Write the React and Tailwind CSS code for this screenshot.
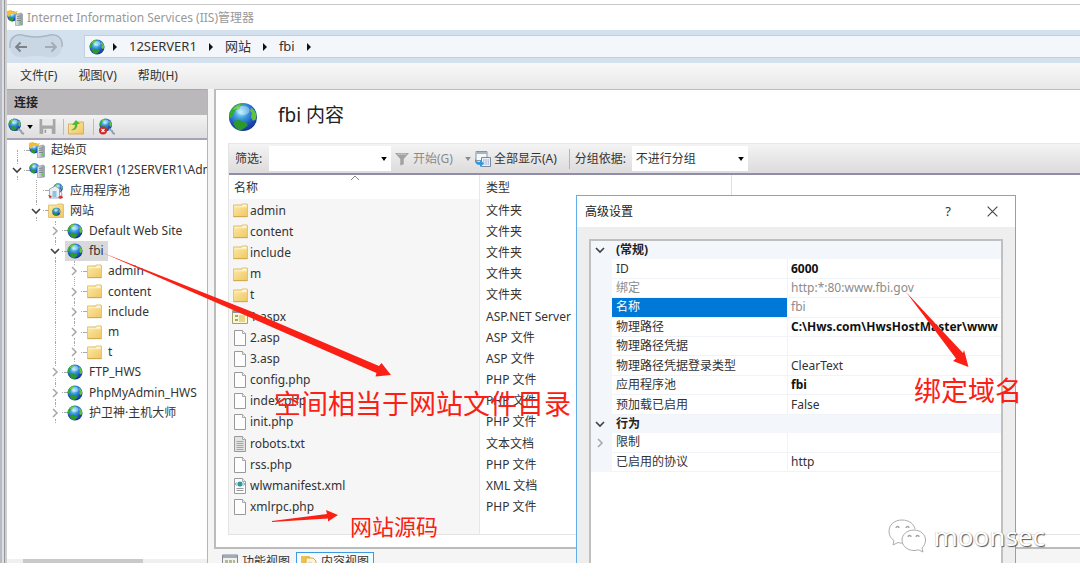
import React from "react";

function Defs() {
  return (
    <svg className="absolute h-0 w-0" aria-hidden="true">
      <defs>
        <radialGradient id="sea" cx="0.42" cy="0.32" r="0.7">
          <stop offset="0" stopColor="#a5e9fa" />
          <stop offset="0.35" stopColor="#3c9be0" />
          <stop offset="0.75" stopColor="#1c4dbb" />
          <stop offset="1" stopColor="#14348c" />
        </radialGradient>
        <linearGradient id="folder" x1="0" y1="0" x2="1" y2="1">
          <stop offset="0" stopColor="#fdeaa6" />
          <stop offset="1" stopColor="#efc764" />
        </linearGradient>
        <linearGradient id="metal" x1="0" y1="0" x2="1" y2="0">
          <stop offset="0" stopColor="#dfe5e8" />
          <stop offset="1" stopColor="#8f9aa3" />
        </linearGradient>
      </defs>
    </svg>
  );
}

function GlobeShape() {
  return (
    <g>
      <circle cx="16" cy="16" r="15" fill="url(#sea)" />
      <path d="M3 9C6 4 10 2 14 1.500l2 1-3 2-1 3-4 1-2 4-2 4-2 1C.8 14 1 12 3 9z" fill="#35ab2c" />
      <path d="M25 6c3 2 4 4 5.500 8l-1 5-3 1-2-4 1-4-2-3z" fill="#62c23c" />
      <path d="M7 20l5-1 4 2 4 1 1 3-5 4-3 1.500c-4-1-6-4-7-7z" fill="#2c9a2a" />
      <path d="M5 8c3-4 6-5 9-6l-3 4-3 2z" fill="#8fdc6a" opacity="0.700" />
      <ellipse cx="16" cy="9" rx="7" ry="5" fill="#fff" opacity="0.350" />
    </g>
  );
}

const Svg = ({ children, className = "size-4", box = "0 0 16 16" }) => (
  <svg viewBox={box} className={"shrink-0 " + className} aria-hidden="true">{children}</svg>
);

const Globe = ({ className }) => <Svg box="0 0 32 32" className={className}><GlobeShape /></Svg>;

const Folder = ({ className }) => (
  <Svg className={className}>
    <path d="M.5 2h8l1.500-1h5L15.500 2v12.500H.5z" fill="url(#folder)" stroke="#dcb75f" strokeWidth="0.800" />
    <path d="M10 1.800h4.500V3.500H10z" fill="#fff" opacity="0.800" />
    <path d="M1.500 4h13" stroke="#fff6cf" />
    <path d="M.5 14.500h15" stroke="#cfa549" />
  </Svg>
);

function Server({ star }) {
  return (
    <Svg>
      <g transform="translate(0 1) scale(.34)"><GlobeShape /></g>
      {star && <path d="M0 1l4-1 3 2 4-1-2 3H4L2 7 0 5z" fill="#f3bd35" />}
      <path d="M8.500 4.500L14 3l1.500 1v11l-7 .8z" fill="url(#metal)" stroke="#87929a" strokeWidth="0.600" />
      <path d="M10 6.500l4-.6M10 8.500l4-.4M10 10.500h4" stroke="#6c7a83" strokeWidth="0.800" />
      <rect x="12.500" y="12" width="1.500" height="1.500" fill="#5fc83c" />
    </Svg>
  );
}

const Pools = () => (
  <Svg>
    <g transform="translate(5 0) scale(.32)"><GlobeShape /></g>
    <path d="M1.500 6l6-3 4 3v9h-10z" fill="#e9f0f4" stroke="#8b9aa5" strokeWidth="0.800" />
    <path d="M4.500 8h4v6h-4z" fill="#8fc2e2" />
    <path d="M0 12l4 1-2 2.500zM10 14l4-2 1 3-3 1z" fill="#cf3d35" />
    <path d="M12 6l2 5-1 2" stroke="#9aa6ad" fill="none" />
  </Svg>
);

const Sites = () => (
  <Svg>
    <path d="M.5 2h8l1.500-1h5L15.500 2v12.500H.5z" fill="url(#folder)" stroke="#dcb75f" strokeWidth="0.800" />
    <g transform="translate(4 4.500) scale(.27)"><GlobeShape /></g>
  </Svg>
);

const Page = ({ kind }) => (
  <Svg>
    <path d="M2.500.5h8l3 3v12h-11z" fill={kind === "text" ? "#e3e3e3" : "#fdfdfd"} stroke="#999" />
    <path d="M10.500.5v3h3" fill="#eee" stroke="#999" strokeWidth="0.800" />
    {kind === "text" && <path d="M4.500 5.500h7M4.500 7.500h7M4.500 9.500h7M4.500 11.500h7M4.500 13.500h7" stroke="#a5a5a5" />}
    {kind === "xml" && (
      <g>
        <circle cx="8" cy="6" r="2.600" fill="#2c9ba0" />
        <path d="M4.500 4.500L3.500 6l1 1.500M11.500 4.500l1 1.500-1 1.500" stroke="#4a63a5" fill="none" strokeWidth="0.800" />
        <path d="M4.500 10.500h7M4.500 12.500h7" stroke="#999" />
      </g>
    )}
  </Svg>
);

const Aspx = () => (
  <Svg>
    <path d="M.5 1.500h15v13H.5z" fill="#fbf6d2" stroke="#a89d6f" />
    <path d="M1 2h14v2H1z" fill="#7f95b8" />
    <path d="M3 6h3v2H3zM3 10h3v2H3z" fill="#9aa86d" />
    <path d="M8 6v7M10 6v7M12 6v7" stroke="#d7b738" />
  </Svg>
);

const Triangle = ({ className = "" }) => (
  <svg viewBox="0 0 7 5" className={"h-1 w-1.5 shrink-0 " + className} aria-hidden="true">
    <path d="M0 0h7L3.500 5z" fill="currentColor" />
  </svg>
);

const Chevron = ({ open }) => (
  <svg viewBox="0 0 10 10" className="size-[10px] shrink-0" fill="none" aria-hidden="true">
    {open
      ? <path d="M1 3l4 4 4-4" stroke="#404040" strokeWidth="1.600" />
      : <path d="M3 1l4 4-4 4" stroke="#a6a6a6" strokeWidth="1.500" />}
  </svg>
);

function WindowFrameLeft() {
  return (
    <div className="flex w-[7px] shrink-0" aria-hidden="true">
      <div className="w-0.5 bg-[#b9bbc3]" />
      <div className="w-0.5 bg-[#dcdfe6]" />
      <div className="w-px bg-[#969696]" />
      <div className="w-0.5 bg-[#cfcfd0]" />
    </div>
  );
}

const Crumb = ({ children }) => (
  <>
    <svg viewBox="0 0 4 8" className="h-2 w-1 shrink-0" aria-hidden="true"><path d="M0 0l4 4-4 4z" fill="#111" /></svg>
    {children && <a href="#">{children}</a>}
  </>
);

function AddressBar() {
  return (
    <div className="flex h-[33px] shrink-0 items-center bg-[#d3e1ef]">
      <div className="relative ml-px flex h-[27px] w-14 items-center justify-between px-1.5">
        <svg viewBox="0 0 56 27" className="absolute inset-0 h-full w-full" aria-hidden="true">
          <path d="M2 15C1 5 7 1 14 2c6 1 8 2 14 2s8-1 14-2c8-1 13 3 12 12-1 9-7 11-14 10-5-1-8-1-12-1s-7 0-11 1C9 25 3 22 2 15z" fill="#c9d6e3" />
          <path d="M2 15C1 5 7 1 14 2c6 1 8 2 14 2s8-1 14-2c8-1 13 3 12 12" fill="none" stroke="#a9b5c1" strokeWidth="1.500" />
        </svg>
        <button aria-label="后退" className="relative">
          <svg viewBox="0 0 14 12" className="h-3 w-3.5" fill="none"><path d="M13 6H2M6.500 1.500L2 6l4.500 4.500" stroke="#7b828a" strokeWidth="1.800" /></svg>
        </button>
        <button aria-label="前进" className="relative">
          <svg viewBox="0 0 14 12" className="h-3 w-3.5" fill="none"><path d="M1 6h11M7.500 1.500L12 6l-4.500 4.500" stroke="#a3abb4" strokeWidth="1.800" /></svg>
        </button>
      </div>
      <nav className="ml-5 flex h-[23px] flex-1 items-center gap-3 border border-r-0 border-[#c3d0dc] bg-[#f3f7fb] pl-1 text-[13px]">
        <div className="flex items-center gap-2"><Globe /><Crumb /></div>
        <a href="#">12SERVER1</a>
        <Crumb>网站</Crumb>
        <Crumb>fbi</Crumb>
        <Crumb />
      </nav>
    </div>
  );
}

const TREE = [
  { label: "起始页", level: 0, icon: "star", state: "none", guides: [] },
  { label: "12SERVER1 (12SERVER1\\Administrator)", level: 0, icon: "server", state: "open", guides: [] },
  { label: "应用程序池", level: 1, icon: "pools", state: "line", guides: [] },
  { label: "网站", level: 1, icon: "sites", state: "open", guides: [] },
  { label: "Default Web Site", level: 2, icon: "globe", state: "closed", guides: [] },
  { label: "fbi", level: 2, icon: "globe", state: "open", guides: [], selected: true },
  { label: "admin", level: 3, icon: "folder", state: "closed", guides: [2] },
  { label: "content", level: 3, icon: "folder", state: "closed", guides: [2] },
  { label: "include", level: 3, icon: "folder", state: "closed", guides: [2] },
  { label: "m", level: 3, icon: "folder", state: "closed", guides: [2] },
  { label: "t", level: 3, icon: "folder", state: "closed", guides: [2] },
  { label: "FTP_HWS", level: 2, icon: "globe", state: "closed", guides: [] },
  { label: "PhpMyAdmin_HWS", level: 2, icon: "globe", state: "closed", guides: [] },
  { label: "护卫神·主机大师", level: 2, icon: "globe", state: "closed", guides: [] },
];

const TREE_ICONS = {
  star: <Server star />, server: <Server />, pools: <Pools />, sites: <Sites />, globe: <Globe className="size-4" />, folder: <Folder className="size-[15px]" />,
};

const Dots = () => <span className="w-px flex-1 border-l border-dotted border-[#aaa]" />;

function TreeRow({ row }) {
  const cells = Array.from({ length: row.level }, (_, i) => i);
  return (
    <li role="treeitem" aria-selected={!!row.selected} className="flex min-h-0 items-center pl-[3px] whitespace-nowrap">
      {cells.map((i) => (
        <span key={i} className="flex w-[19px] self-stretch pl-[7px]">
          {row.guides.includes(i) && <span className="border-l border-dotted border-[#aaa]" />}
        </span>
      ))}
      <span className="flex w-3.5 shrink-0 flex-col items-center self-stretch">
        {row.state === "none" && <><span className="flex-1" /><Dots /></>}
        {row.state === "line" && <Dots />}
        {(row.state === "open" || row.state === "closed") && (
          <><Dots /><button aria-label={row.label} className="my-px"><Chevron open={row.state === "open"} /></button><Dots /></>
        )}
      </span>
      <span className="w-[3px] shrink-0 border-t border-dotted border-[#aaa]" />
      <span className={"flex h-full items-center pr-1 " + (row.selected ? "bg-[#d9d9d9]" : "")}>
        <span className="w-0.5 shrink-0 border-t border-dotted border-[#aaa]" />
        <span className="flex w-4 shrink-0 justify-center">{TREE_ICONS[row.icon]}</span>
        <span className="pl-1.5">{row.label}</span>
      </span>
    </li>
  );
}

function Sidebar() {
  return (
    <aside className="flex w-[201px] shrink-0 flex-col overflow-hidden border-r border-[#b5b5b5] bg-white">
      <h2 className="flex h-[26px] shrink-0 items-center border-t border-[#a9a7a9] bg-[#bbb8bb] pl-[7px] font-bold text-[#222]">连接</h2>
      <div className="flex h-[25px] shrink-0 items-center border-b-2 border-[#a5a3b8] bg-linear-to-b from-[#f3f3f3] to-[#dfddde] pl-px">
        <button aria-label="连接" className="flex items-center gap-0.5">
          <Svg className="size-[17px]" box="0 0 17 17"><g transform="scale(.42)"><GlobeShape /></g><path d="M10 11l3 2 1 2 2 1" stroke="#8fa5b4" strokeWidth="2" fill="none" /></Svg>
          <Triangle className="text-black" />
        </button>
        <button aria-label="保存" className="ml-1.5">
          <Svg className="size-[17px]"><path d="M.5 1h15v14H.5z" fill="#a7a7a7" /><path d="M3 1h10v6H3zM4 10h8v5H4z" fill="#e9e9e9" /><path d="M6 11v3" stroke="#999" strokeWidth="1.500" /></Svg>
        </button>
        <span className="ml-[7px] h-4 w-px bg-[#c3bda8]" />
        <button aria-label="向上" className="ml-1">
          <Svg><path d="M.5 5h7l2-2h6v12H.5z" fill="url(#folder)" stroke="#d0a544" strokeWidth="0.800" /><path d="M3 11C6 10 7 8 7 6H4l4-5 4 4H9.500C9.500 9 7 12 3 11z" fill="#4dbb2f" /></Svg>
        </button>
        <span className="ml-[9px] h-4 w-px bg-[#c3bda8]" />
        <button aria-label="断开连接" className="ml-1">
          <Svg className="size-[17px]" box="0 0 17 17"><g transform="translate(1 0) scale(.42)"><GlobeShape /></g><path d="M11 11l3 2 1 2 2 1" stroke="#8fa5b4" strokeWidth="2" fill="none" /><circle cx="5" cy="12.500" r="4" fill="#cf2929" /><path d="M3.500 11l3 3M6.500 11l-3 3" stroke="#fff" strokeWidth="1.200" /></Svg>
        </button>
      </div>
      <ul role="tree" className="grid h-[283px] shrink-0 grid-rows-14">
        {TREE.map((row) => <TreeRow key={row.label} row={row} />)}
      </ul>
      <div className="mt-auto h-1 shrink-0 bg-[#f0f0f0] pl-4"><div className="h-full w-[120px] bg-[#c9c9c9]" /></div>
    </aside>
  );
}

const FILES = [
  ["admin", "文件夹", "folder"], ["content", "文件夹", "folder"], ["include", "文件夹", "folder"], ["m", "文件夹", "folder"], ["t", "文件夹", "folder"],
  ["1.aspx", "ASP.NET Server", "aspx"], ["2.asp", "ASP 文件", "page"], ["3.asp", "ASP 文件", "page"], ["config.php", "PHP 文件", "page"],
  ["index.php", "PHP 文件", "page"], ["init.php", "PHP 文件", "page"], ["robots.txt", "文本文档", "text"], ["rss.php", "PHP 文件", "page"],
  ["wlwmanifest.xml", "XML 文档", "xml"], ["xmlrpc.php", "PHP 文件", "page"],
];

function fileIcon(kind) {
  if (kind === "folder") return <Folder className="size-[15px]" />;
  if (kind === "aspx") return <Aspx />;
  return <Page kind={kind} />;
}

function FilterBar() {
  return (
    <div className="flex h-8 shrink-0 items-center border-t border-b-2 border-t-[#e8e8e8] border-b-[#8f8da8] bg-linear-to-b from-[#f4f4f4] to-[#dddbdc] pl-1.5 whitespace-nowrap">
      <label htmlFor="filter" className="w-[34px]">筛选:</label>
      <div className="flex h-[25px] w-[122px] items-center bg-white pr-1">
        <input id="filter" className="h-full min-w-0 flex-1 bg-transparent px-1 outline-none" />
        <button aria-label="筛选历史"><Triangle className="text-black" /></button>
      </div>
      <button className="ml-1 flex items-center gap-1 text-[#8a8a8a]">
        <Svg className="size-3.5"><path d="M0 1h16l-6 7v6l-4 1.500V8z" fill="#a2a2a2" /><path d="M3 2.500h10" stroke="#d3d3d3" /></Svg>
        开始(G)
        <Triangle className="ml-2" />
      </button>
      <button className="ml-1 flex items-center gap-[3px]">
        <Svg className="size-4"><path d="M1 .5h11v9H1z" fill="#f4f8fb" stroke="#8796a5" /><path d="M1 1h11v2H1z" fill="#a6b6c6" /><path d="M6.500 6.500h9v9h-9z" fill="#eef1f8" stroke="#7889a0" /><path d="M8 9h6M8 11h6M8 13h6" stroke="#8fa0c8" strokeDasharray="1.500 .8" /><path d="M0 6c0 4 2 5 5 5v-2l4 3.500L5 16v-2c-4 0-6-3-5-8z" fill="#2d9bdd" /></Svg>
        全部显示(A)
      </button>
      <span className="ml-3 h-5 w-px bg-[#b9b5a2]" />
      <label htmlFor="group" className="ml-[5px] w-[57px]">分组依据:</label>
      <div className="relative flex h-[25px] w-[116px] items-center bg-white">
        <select id="group" className="h-full w-full appearance-none bg-transparent pl-1 outline-none"><option>不进行分组</option></select>
        <Triangle className="pointer-events-none absolute right-1 text-black" />
      </div>
    </div>
  );
}

function Content() {
  return (
    <div className="flex min-w-0 flex-1 flex-col bg-[#f5f5f5]">
      <main className="flex min-h-0 flex-1 flex-col border-b-2 border-l-2 border-t border-[#bcbcbc] bg-white">
        <header className="flex h-[53px] shrink-0 items-center gap-5 pl-3">
          <Globe className="size-[30px]" />
          <h1 className="pb-1 text-[19px] leading-6 text-[#222]">fbi 内容</h1>
        </header>
        <section className="mb-3 ml-3 flex min-h-0 flex-1 flex-col border-b border-l border-[#e3e3e3]">
          <FilterBar />
          <div className="relative flex min-h-0 flex-1">
            <div className="w-[251px] shrink-0 border-r border-[#e2e8ee] pt-6"><div className="h-full bg-[#f6f6f6]" /></div>
            <div className="h-6 w-[252px] shrink-0 border-r border-[#dedede]" />
            <table className="absolute inset-x-0 top-0 h-[343px] table-fixed border-collapse text-left">
              <thead>
                <tr className="h-[25px]">
                  <th className="relative w-[251px] p-0 pl-[5px] font-normal">
                    <button>名称</button>
                    <svg viewBox="0 0 8 5" className="absolute top-0 left-[122px] h-[5px] w-2" fill="none" aria-hidden="true"><path d="M0 5l4-4 4 4" stroke="#888" /></svg>
                  </th>
                  <th className="p-0 pl-1.5 font-normal"><button>类型</button></th>
                </tr>
              </thead>
              <tbody>
                {FILES.map(([name, type, kind]) => (
                  <tr key={name}>
                    <td className="p-0 pl-[3px]"><span className="flex items-center gap-0.5"><span className="flex w-4 justify-center">{fileIcon(kind)}</span>{name}</span></td>
                    <td className="p-0 pl-1.5 whitespace-nowrap">{type}</td>
                  </tr>
                ))}
              </tbody>
            </table>
          </div>
        </section>
      </main>
      <div className="flex h-3.5 shrink-0 items-start overflow-hidden pl-1.5 pt-[3px]">
        <button className="flex h-6 items-center gap-1 px-0.5 pb-1">
          <Svg><path d="M.5 1h15v14H.5z" fill="#f1f1ec" stroke="#7f8894" /><path d="M1 1h14v3H1z" fill="#9eabbb" /><path d="M3 6h3v3H3zM7 6h3v3H7zM11 6h2v3h-2z" fill="#b8b79b" /></Svg>
          功能视图
        </button>
        <button className="ml-1 flex h-6 items-center gap-1 border border-[#3c9ae0] bg-[#f8fbfe] px-1 pb-1">
          <Svg><path d="M0 2h9v9H0z" fill="#edc052" /><path d="M5 4h7l3 3v8H5z" fill="#fdf5d3" stroke="#d9ab45" /><circle cx="9" cy="10" r="2.500" fill="#d2dbe2" /></Svg>
          内容视图
        </button>
      </div>
    </div>
  );
}

const PROPS = [
  { group: "(常规)" },
  { name: "ID", value: "6000", bold: true },
  { name: "绑定", value: "http:*:80:www.fbi.gov", dim: true },
  { name: "名称", value: "fbi", selected: true },
  { name: "物理路径", value: "C:\\Hws.com\\HwsHostMaster\\www", bold: true },
  { name: "物理路径凭据", value: "" },
  { name: "物理路径凭据登录类型", value: "ClearText" },
  { name: "应用程序池", value: "fbi", bold: true },
  { name: "预加载已启用", value: "False" },
  { group: "行为" },
  { name: "限制", value: "", expandable: true },
  { name: "已启用的协议", value: "http" },
];

function PropRow({ p }) {
  if (p.group) {
    return (
      <tr className="bg-[#f3f6fb]">
        <td className="w-[21px] p-0 pl-1"><button aria-label={p.group} className="block"><Chevron open /></button></td>
        <th colSpan="2" className="p-0 pl-1 text-left font-bold text-[#222]">{p.group}</th>
      </tr>
    );
  }
  const nameStyle = p.selected ? "bg-[#0078d7] text-white" : p.dim ? "text-[#8c8c8c]" : "";
  const valueStyle = p.bold ? "font-bold text-[#111]" : p.dim || p.selected ? "text-[#8c8c8c]" : "";
  return (
    <tr>
      <td className="w-[21px] bg-[#f3f6fb] p-0 pl-1">{p.expandable && <button aria-label={p.name} className="block"><Chevron /></button>}</td>
      <th className={"w-[176px] border-r border-b border-[#f0f3f8] p-0 pl-1 text-left font-normal " + nameStyle}>{p.name}</th>
      <td className={"overflow-hidden border-b border-[#f0f3f8] p-0 pl-[3px] whitespace-nowrap " + valueStyle}>{p.value}</td>
    </tr>
  );
}

function SettingsDialog() {
  return (
    <div role="dialog" aria-labelledby="dialog-title" className="absolute top-[195px] right-16 bottom-0 flex w-[440px] flex-col border border-b-0 border-[#62aeea] bg-[#eeeeee]">
      <div className="flex h-[31px] shrink-0 items-center bg-white pr-4 pl-2">
        <h2 id="dialog-title" className="flex-1 text-[#222]">高级设置</h2>
        <button aria-label="帮助" className="w-5 text-[13px]">?</button>
        <button aria-label="关闭" className="ml-7">
          <svg viewBox="0 0 12 12" className="size-[13px]" fill="none"><path d="M1.500 1.500l9 9M10.500 1.500l-9 9" stroke="#444" /></svg>
        </button>
      </div>
      <div className="mx-3 mt-3 min-h-0 flex-1 overflow-hidden border-2 border-b-0 border-[#c0c0c0] bg-white">
        <table className="h-[231px] w-full table-fixed border-separate border-spacing-0 leading-4">
          <colgroup><col className="w-[21px]" /><col className="w-[176px]" /><col /></colgroup>
          <tbody>{PROPS.map((p) => <PropRow key={p.group || p.name} p={p} />)}</tbody>
        </table>
      </div>
    </div>
  );
}

function Annotations() {
  return (
    <div className="pointer-events-none absolute inset-0 text-[27px] leading-8 whitespace-nowrap text-[#fb2015]">
      <svg viewBox="0 0 1080 563" className="absolute top-0 left-0 h-[563px] w-[1080px]" fill="#fb2015" aria-hidden="true">
        <path d="M102 252.500L250 311l129 55 2.500-3 9.500 12-15.500 1.500 1-3.500L240 313z" />
        <path d="M906 292l57 61 1-3 4.500 17-15.500-6 3-2.500z" />
        <path d="M272 521l55-7-1-4 12 5-10 6.500v-3L272 522z" />
      </svg>
      <p className="absolute top-[388px] left-[274px]">空间相当于网站文件目录</p>
      <p className="absolute top-[375px] left-[914px]">绑定域名</p>
      <p className="absolute top-[510px] left-[350px] text-[22px]">网站源码</p>
    </div>
  );
}

function Watermark() {
  return (
    <div className="pointer-events-none absolute right-[35px] bottom-2.5 flex items-center gap-2">
      <svg viewBox="0 0 38 34" className="h-[34px] w-[38px]" fill="#fff" stroke="#a3a3a3" strokeWidth="0.900" aria-hidden="true">
        <path d="M14 1C6 1 1 6 1 12.500c0 4 2 7 5 9L5 26l5-2.500c2 .6 3.500.7 5 .6" />
        <path d="M14 1c7 0 12 4 13 9" />
        <path d="M26 11c-7 0-12 4.500-12 10s5 10.500 12 10.500c1.500 0 3-.2 4.500-.7L35 33l-1-4c2-2 3.500-4.500 3.500-8 0-5.500-5-10-11.500-10z" />
        <path d="M8 9c0-2 3-2 3 0M18 9c0-2 3-2 3 0M20 18c0-2 3-2 3 0M28 18c0-2 3-2 3 0" fill="none" strokeWidth="1.300" />
      </svg>
      <span className="text-[26px] leading-8 text-white [text-shadow:1px_1px_1px_#555,0_0_1px_#aaa]">moonsec</span>
    </div>
  );
}

export default function App() {
  return (
    <div className="h-screen overflow-hidden bg-white pb-[18px] font-['Noto_Sans','Noto_Sans_CJK_SC',sans-serif] text-xs text-[#333]">
      <Defs />
      <div className="relative flex h-full overflow-hidden">
        <WindowFrameLeft />
        <div className="flex min-w-0 flex-1 flex-col">
          <div className="h-[5px] shrink-0 border-b border-[#c9c9c9] bg-white" />
          <div className="flex h-[25px] shrink-0 items-center gap-1 bg-white text-[#999]">
            <Server star />
            <span>Internet Information Services (IIS)管理器</span>
          </div>
          <AddressBar />
          <nav className="flex h-[26px] shrink-0 items-center gap-[21px] bg-linear-to-b from-[#f8f8f8] to-[#e8e8e8] pl-[13px]">
            <button>文件(F)</button>
            <button>视图(V)</button>
            <button>帮助(H)</button>
          </nav>
          <div className="flex min-h-0 flex-1 gap-1.5 bg-[#f5f5f5]">
            <Sidebar />
            <Content />
          </div>
        </div>
        <SettingsDialog />
        <Annotations />
        <Watermark />
      </div>
    </div>
  );
}
